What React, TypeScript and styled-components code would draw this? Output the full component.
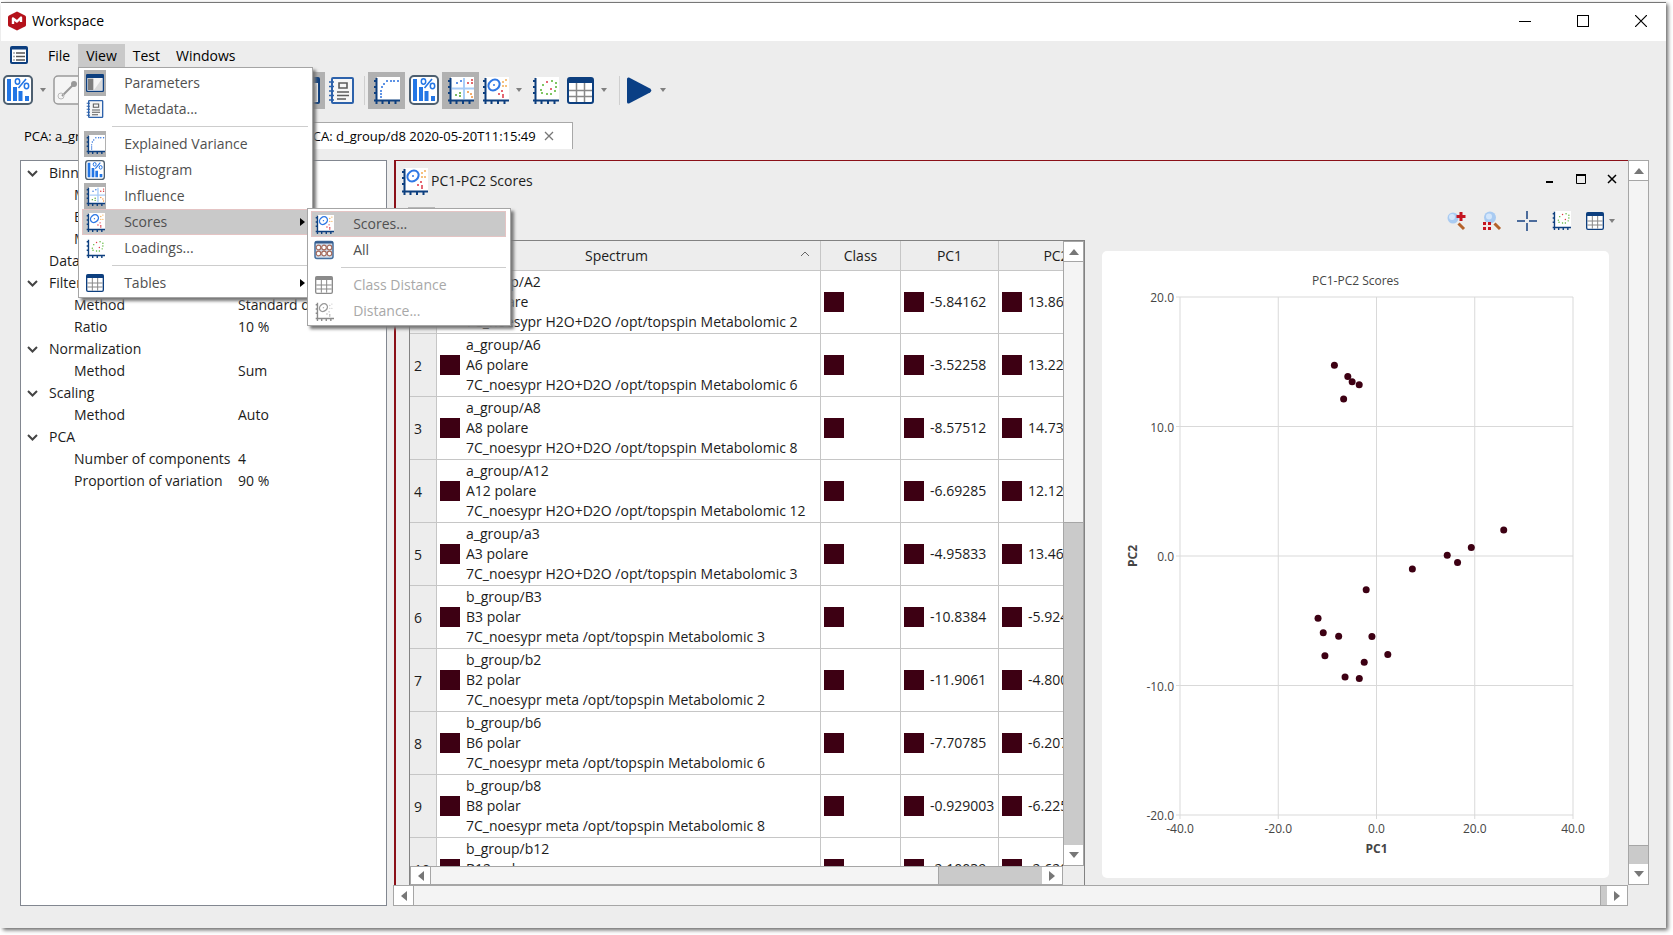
import React from "react";
import styled, { createGlobalStyle, css } from "styled-components";

const NAVY = "#0d3f7f";
const LINE = "#a6a6a6";
const WINE = "#3d0013";

const GlobalStyle = createGlobalStyle`
  * { box-sizing: border-box; }
  body {
    margin: 0;
    background: #fff;
    color: #1c1c1c;
    font-family: "Open Sans", "Noto Sans", sans-serif;
    font-size: 14px;
    line-height: 20px;
  }
  button {
    font: inherit;
    color: inherit;
    background: none;
    border: 0;
    padding: 0;
    display: flex;
    align-items: center;
    text-align: left;
  }
  svg { display: block; flex: none; }
`;

/* ---------- icons ---------- */

type IconProps = { size?: number; muted?: boolean };

const Dots = ({ points, color, r = 1 }: { points: number[][]; color: string; r?: number }) => (
  <>
    {points.map(([x, y], i) => (
      <circle key={i} cx={x} cy={y} r={r} fill={color} />
    ))}
  </>
);

const Axes = ({ size = 27, muted, children }: IconProps & { children?: React.ReactNode }) => (
  <svg width={size} height={size} viewBox="0 0 27 27">
    <rect x="4" y="0" width="23" height="23" fill="#fff" />
    <path
      d="M3.5 1V26M1 23.5H27M1 4h3M1 10h3M1 16h3M9.500 23v4M16 23v4M22.500 23v4M3.500 23v4"
      stroke={muted ? "#8b8b8b" : NAVY}
      strokeWidth="2"
      fill="none"
    />
    {children}
  </svg>
);

const VarianceIcon = (p: IconProps) => (
  <Axes {...p}>
    <Dots
      color="#2a6fdc"
      points={[[8, 20], [8, 17], [8, 14], [9, 10], [11, 7], [14, 4], [18, 4], [21, 4], [25, 4]]}
    />
  </Axes>
);

const InfluenceIcon = (p: IconProps) => (
  <Axes {...p}>
    <path d="M17 1V22M5 11.500H27" stroke="#a9cdf7" strokeWidth="2" />
    <Dots color="#2a6fdc" points={[[10, 6], [14, 4]]} />
    <Dots color="#d8343a" points={[[21, 6], [25, 3], [25, 6]]} />
    <Dots color="#4da52e" points={[[9, 18], [13, 16], [13, 19]]} />
    <Dots color="#f0913a" points={[[21, 15], [24, 17], [25, 20]]} />
  </Axes>
);

const ScoresIcon = (p: IconProps) => (
  <Axes {...p}>
    <ellipse
      cx="12"
      cy="8"
      rx="6"
      ry="5"
      transform="rotate(-40 12 8)"
      fill="none"
      stroke={p.muted ? "#9a9a9a" : "#2f78e4"}
      strokeWidth="2"
    />
    <Dots color={p.muted ? "#aaa" : "#2f78e4"} points={[[12, 8]]} />
    <Dots color={p.muted ? "#ccc" : "#f3ad55"} points={[[21, 5], [24, 3], [24, 9], [21, 9]]} />
    <Dots color={p.muted ? "#aaa" : "#dc3545"} points={[[17, 17], [20, 14], [21, 18], [21, 20]]} />
  </Axes>
);

const LoadingsIcon = (p: IconProps) => (
  <Axes {...p}>
    <Dots color="#55b32f" points={[[9, 13], [20, 4], [24, 6], [24, 10], [23, 14], [19, 17], [15, 17], [10, 16], [11, 8]]} />
    <Dots color="#dc3545" points={[[15, 5], [19, 12]]} />
  </Axes>
);

const TableIcon = ({ size = 27, muted }: IconProps) => (
  <svg width={size} height={size} viewBox="0 0 27 27">
    <rect x="1" y="1" width="25" height="25" rx="2" fill="#fff" stroke={muted ? "#8b8b8b" : NAVY} strokeWidth="2" />
    <rect x="1" y="1" width="25" height="5" fill={muted ? "#8b8b8b" : NAVY} />
    <path d="M9.500 6V25M17.500 6V25M2 13.500H25M2 19.500H25" stroke="#888" strokeWidth="1.500" />
  </svg>
);

const HistogramIcon = ({ size = 30 }: IconProps) => (
  <svg width={size} height={size} viewBox="0 0 30 30">
    <rect x="1" y="1" width="28" height="28" rx="4" fill="#fff" stroke="#4d5f70" strokeWidth="2" />
    <path d="M4 4h4v22H4zM10 12h4v14h-4zM15.500 16h4v10h-4zM22 21h4v5h-4z" fill="#2376e5" />
    <path d="M15.500 13L23 4" stroke="#2376e5" strokeWidth="1.600" />
    <ellipse cx="14.500" cy="6.500" rx="2.200" ry="2.700" fill="none" stroke="#2376e5" strokeWidth="1.500" />
    <ellipse cx="23.500" cy="11" rx="2.200" ry="2.700" fill="none" stroke="#2376e5" strokeWidth="1.500" />
  </svg>
);

const NotebookIcon = ({ size = 27 }: IconProps) => (
  <svg width={size} height={size} viewBox="0 0 27 27">
    <rect x="4" y="1" width="21" height="25" rx="1" fill="#f6f6f6" stroke="#2d62ab" strokeWidth="2" />
    <path d="M1 5h5M1 9.500h5M1 14h5M1 18.500h5M1 23h5" stroke="#2d62ab" strokeWidth="1.600" />
    <path d="M11 6h8v5h-8zM9 15h12M9 18.500h12M9 22h9" stroke="#5c5c5c" strokeWidth="1.600" fill="none" />
  </svg>
);

const ParametersIcon = ({ size = 27 }: IconProps) => (
  <svg width={size} height={size} viewBox="0 0 27 27">
    <rect x="1" y="1" width="25" height="25" rx="1" fill="#f4f4f4" stroke={NAVY} strokeWidth="2" />
    <rect x="1" y="1" width="25" height="5" fill={NAVY} />
    <rect x="3" y="7" width="8" height="17" fill="#7e7e7e" />
    <path d="M24 7v17H12z" fill="#d9d9d9" />
  </svg>
);

const ListIcon = () => (
  <svg width="18" height="18" viewBox="0 0 18 18">
    <rect x="1" y="1" width="16" height="16" rx="1" fill="#fff" stroke={NAVY} strokeWidth="2" />
    <path d="M1 2.500h16" stroke={NAVY} strokeWidth="2" />
    <path d="M6 7h9M6 10.500h9M6 14h9" stroke="#555" strokeWidth="1.300" />
    <path d="M3.500 7h1M3.500 10.500h1M3.500 14h1" stroke="#555" strokeWidth="1.300" />
  </svg>
);

const AllIcon = ({ size = 19 }: IconProps) => (
  <svg width={size} height={size} viewBox="0 0 20 19">
    <rect x="1" y="1" width="18" height="17" rx="2" fill="#cfdcea" stroke="#456f9f" strokeWidth="1.500" />
    <path d="M1 2h18" stroke="#345b8c" strokeWidth="2" />
    {[4.5, 10, 15.5].map((x) => (
      <g key={x} fill="#fff" stroke="#a46a5c" strokeWidth="1.200">
        <circle cx={x} cy="7" r="2.300" />
        <circle cx={x} cy="13" r="2.300" />
      </g>
    ))}
  </svg>
);

const LinkIcon = () => (
  <svg width="30" height="30" viewBox="0 0 30 30">
    <rect x="1" y="1" width="28" height="28" rx="4" fill="#f5f5f5" stroke="#9a9a9a" strokeWidth="1.500" />
    <path d="M9 21L21 9" stroke="#999" strokeWidth="2" />
    <circle cx="8" cy="21" r="3" fill="none" stroke="#bbb" />
    <circle cx="21" cy="9" r="3" fill="#999" />
  </svg>
);

const PlayIcon = () => (
  <svg width="26" height="27" viewBox="0 0 26 27">
    <path d="M1 2Q1 0 3 .500L24 11.500Q26.500 13.500 24 15.500L3 26.500Q1 27 1 25z" fill="#0a3f85" />
  </svg>
);

const Logo = () => (
  <svg width="18" height="20" viewBox="0 0 18 20">
    <path d="M9 0.500L17 4.500Q18 5 18 6V14Q18 15 17 15.500L9 19.500L1 15.500Q0 15 0 14V6Q0 5 1 4.500Z" fill="#b5121b" />
    <path d="M5 13V7.500L9 10.500L13 6.500V11" stroke="#fff" strokeWidth="2.400" fill="none" strokeLinejoin="round" />
  </svg>
);

const ZoomPlusIcon = () => (
  <svg width="20" height="20" viewBox="0 0 20 20">
    <circle cx="6" cy="7" r="5.500" fill="#a9cbf2" />
    <circle cx="5" cy="6" r="3" fill="#d3e6fb" />
    <path d="M11.500 12.500L17 18" stroke="#b4622a" strokeWidth="3" />
    <path d="M14 1v9M9.500 5.500h9" stroke="#c41420" strokeWidth="3" />
  </svg>
);

const ZoomFitIcon = () => (
  <svg width="20" height="20" viewBox="0 0 20 20">
    <circle cx="8" cy="6.500" r="6" fill="#a9cbf2" />
    <circle cx="7" cy="5.500" r="3" fill="#d3e6fb" />
    <path d="M12.500 12.500L18 18" stroke="#b4622a" strokeWidth="3" />
    <path d="M1 11h8v8h-8z" fill="#f3e4e4" />
    <path d="M1 11h3v3h-3zM6 11h3v3h-3zM1 16h3v3h-3zM6 16h3v3h-3z" fill="#c41420" />
  </svg>
);

const CrossIcon = () => (
  <svg width="20" height="20" viewBox="0 0 20 20">
    <path d="M0 10h8M12 10h8M10 0v8M10 12v8" stroke="#4c6c9c" strokeWidth="2" />
  </svg>
);

const Chevron = () => (
  <svg width="11" height="7" viewBox="0 0 11 7">
    <path d="M1 1L5.500 5.500L10 1" stroke="#444" strokeWidth="2" fill="none" />
  </svg>
);

const SubmenuArrow = () => (
  <svg width="5" height="8" viewBox="0 0 5 8">
    <path d="M0 0L5 4L0 8z" fill="#000" />
  </svg>
);

const turns = { up: 0, right: 90, down: 180, left: 270 };
const ScrollArrow = ({ to }: { to: keyof typeof turns }) => (
  <svg width="12" height="12" viewBox="0 0 12 12">
    <path d="M1 9L6 3L11 9z" fill="#777" transform={`rotate(${turns[to]} 6 6)`} />
  </svg>
);

/* ---------- window shell ---------- */

const Screen = styled.div`
  height: 100vh;
  min-height: 600px;
  padding: 2px 7px 7px 1px;
  display: flex;
  overflow: hidden;
`;

const Window = styled.div`
  flex: 1;
  min-width: 0;
  display: flex;
  flex-direction: column;
  background: #ededed;
  border-top: 1px solid #777;
  box-shadow: 2px 2px 4px 0 #666;
`;

const TitleBar = styled.header`
  height: 38px;
  flex: none;
  padding: 0 2px 2px 7px;
  display: flex;
  align-items: center;
  background: #fff;
  color: #000;
`;

const WindowTitle = styled.h1`
  margin: 0 0 0 6px;
  flex: 1;
  font-size: 14px;
  font-weight: 400;
`;

const WindowButton = styled.button`
  width: 46px;
  height: 30px;
  justify-content: center;
  & + & { margin-left: 12px; }
`;

const MenuBar = styled.nav`
  height: 29px;
  flex: none;
  display: flex;
  align-items: center;
  padding: 0 9px;
  color: #000;
`;

const MenuBarIcon = styled.span`
  padding: 0 12px 2px 0;
`;

const MenuAnchor = styled.div`
  position: relative;
`;

const MenuTitle = styled.button<{ $open?: boolean }>`
  height: 23px;
  padding: 0 8px;
  background: ${(p) => (p.$open ? "#c9c9c9" : "none")};
`;

const ToolBar = styled.div`
  height: 40px;
  flex: none;
  padding-left: 2px;
  display: flex;
  align-items: center;
`;

const HiddenTools = styled.div`
  width: 285px;
  display: flex;
  align-items: center;
  gap: 2px;
`;

const Tool = styled.button<{ $checked?: boolean; $slim?: boolean }>`
  width: ${(p) => (p.$slim ? 32 : 37)}px;
  height: 37px;
  justify-content: center;
  background: ${(p) => (p.$checked ? "#b1b1b1" : "none")};
`;

const DropArrow = styled.button`
  width: 16px;
  height: 37px;
  justify-content: center;
  &::after {
    content: "";
    border: 3px solid transparent;
    border-top: 4px solid #808080;
    border-bottom: 0;
  }
`;

const ToolDivider = styled.span`
  width: 1px;
  height: 29px;
  margin: 0 3px 0 7px;
  background: #cfcfcf;
`;

/* ---------- menus ---------- */

const MenuPanel = styled.div<{ $sub?: boolean }>`
  position: absolute;
  z-index: ${(p) => (p.$sub ? 3 : 2)};
  top: ${(p) => (p.$sub ? 140 : 23)}px;
  left: ${(p) => (p.$sub ? 228 : 0)}px;
  width: ${(p) => (p.$sub ? 204 : 235)}px;
  padding: 2px 4px 1px 3px;
  background: #fff;
  border: 1px solid #a5a5a5;
  box-shadow: 3px 3px 3px #777;
  color: #505050;
`;

const MenuItem = styled.button<{ $active?: boolean }>`
  width: 100%;
  height: 26px;
  border: 1px solid transparent;
  ${(p) =>
    p.$active &&
    css`
      background: #c9c9c9;
      border-color: #e4c4c4;
    `}
  &:disabled { color: #a8a8a8; }
`;

const MenuIcon = styled.span<{ $checked?: boolean }>`
  width: 22px;
  height: 26px;
  margin: 0 18px 0 1px;
  display: flex;
  flex: none;
  align-items: center;
  justify-content: center;
  background: ${(p) => (p.$checked ? "#b1b1b1" : "none")};
`;

const MenuLabel = styled.span`
  flex: 1;
`;

const MenuArrow = styled.span`
  padding-right: 2px;
`;

const MenuDivider = styled.hr`
  height: 1px;
  margin: 4px 0 4px 30px;
  border: 0;
  background: #cdcdcd;
`;

/* ---------- document tabs ---------- */

const TabBar = styled.div`
  height: 39px;
  flex: none;
  padding: 12px 0 0 7px;
  display: flex;
  font-size: 13px;
  color: #000;
`;

const Tab = styled.div<{ $active?: boolean }>`
  width: ${(p) => (p.$active ? 284 : 281)}px;
  height: 27px;
  padding-left: 16px;
  display: flex;
  align-items: center;
  gap: 8px;
  white-space: nowrap;
  ${(p) =>
    p.$active &&
    css`
      background: #fff;
      border: solid #a8a8a8;
      border-width: 1px 1px 0 0;
    `}
`;

const Workspace = styled.main`
  flex: 1;
  min-height: 0;
  margin: 11px 17px 22px 19px;
  display: flex;
  gap: 6px;
`;

/* ---------- parameter tree ---------- */

const TreePanel = styled.aside`
  width: 367px;
  flex: none;
  padding: 1px 6px;
  background: #fff;
  border: 1px solid #828790;
  overflow: hidden;
`;

const TreeRow = styled.div<{ $group?: boolean }>`
  height: 22px;
  display: grid;
  grid-template-columns: ${(p) => (p.$group ? "22px 1fr" : "164px 1fr")};
  padding-left: ${(p) => (p.$group ? 0 : 47)}px;
  align-items: center;
  white-space: nowrap;
`;

/* ---------- inner window ---------- */

const Mdi = styled.section`
  flex: 1;
  min-width: 0;
  display: grid;
  grid-template: minmax(0, 1fr) 21px / minmax(0, 1fr) 21px;
`;

const SubWindow = styled.div`
  margin-left: 1px;
  min-height: 0;
  display: flex;
  flex-direction: column;
  border: solid #8b1018;
  border-width: 1px 0 0 2px;
`;

const SubTitle = styled.div`
  height: 40px;
  flex: none;
  padding: 0 1px 0 5px;
  display: flex;
  align-items: center;
`;

const SubHeading = styled.h2`
  margin: 0 0 0 3px;
  flex: 1;
  font-size: 14px;
  font-weight: 400;
`;

const SubButton = styled.button`
  width: 31px;
  height: 20px;
  margin-bottom: 4px;
  justify-content: center;
`;

const SubTools = styled.div`
  height: 39px;
  flex: none;
  padding-right: 8px;
  display: flex;
  align-items: center;
  justify-content: flex-end;
  gap: 15px;
`;

const SavedTool = styled.button`
  width: 27px;
  height: 27px;
  margin: 0 auto 0 12px;
  background: #b9b9b9;
`;

const TableTool = styled.div`
  display: flex;
  align-items: center;
`;

const SubBody = styled.div`
  flex: 1;
  min-height: 0;
  padding: 0 19px 0 13px;
  display: flex;
  gap: 17px;
`;

const TableFrame = styled.div`
  width: 676px;
  flex: none;
  display: grid;
  grid-template: minmax(0, 1fr) 19px / minmax(0, 1fr) 21px;
  border: 1px solid #828282;
  border-bottom: 0;
`;

const TableView = styled.div`
  overflow: hidden;
  background: #fff;
`;

const ScoresTable = styled.table`
  width: 704px;
  table-layout: fixed;
  border-collapse: separate;
  border-spacing: 0;
  th, td {
    padding: 0;
    font-weight: 400;
    border: solid #c6c6c6;
    border-width: 0 1px 1px 0;
  }
`;

const HeadCell = styled.th<{ $width: number; $sorted?: boolean }>`
  width: ${(p) => p.$width}px;
  height: 30px;
  background: #ededed;
  text-align: center;
  span { margin-right: ${(p) => (p.$sorted ? 24 : 0)}px; }
  svg { float: right; margin: 5px 10px 0 -20px; }
`;

const RowHead = styled.th`
  background: #ededed;
  && { padding: 2px 0 0 4px; }
  text-align: left;
`;

const Cell = styled.td`
  height: 63px;
`;

const CellContent = styled.div`
  padding-left: 3px;
  height: 62px;
  display: flex;
  align-items: center;
  gap: 6px;
  white-space: pre;
`;

const Swatch = styled.span`
  width: 20px;
  height: 20px;
  flex: none;
  background: ${WINE};
`;

/* ---------- scroll bars ---------- */

const Bar = styled.div<{ $horizontal?: boolean }>`
  display: flex;
  flex-direction: ${(p) => (p.$horizontal ? "row" : "column")};
  background: #f4f4f4;
  border: 1px solid ${LINE};
`;

const ScrollButton = styled.button`
  flex: 0 0 20px;
  justify-content: center;
  background: #fff;
`;

const Track = styled.div<{ $grow: number }>`
  flex: ${(p) => p.$grow} 1 0;
  box-shadow: 0 0 0 1px ${LINE};
`;

const Thumb = styled.div<{ $grow?: number; $size?: number }>`
  flex: ${(p) => (p.$grow ? `${p.$grow} 1 0` : `0 0 ${p.$size}px`)};
  background: #cacaca;
  box-shadow: 0 0 0 1px ${LINE};
`;

/* ---------- chart ---------- */

const ChartCard = styled.figure`
  flex: 1;
  min-width: 0;
  margin: 11px 0 7px;
  padding: 20px 36px 63px 78px;
  display: flex;
  flex-direction: column;
  background: #fff;
  border-radius: 5px;
`;

const ChartTitle = styled.figcaption`
  height: 26px;
  margin: 0 -36px 0 -78px;
  text-align: center;
  font-size: 12px;
  color: #454545;
`;

const Plot = styled.svg`
  width: 100%;
  flex: 1 1 0;
  min-height: 0;
  overflow: visible;
  font-size: 12px;
  fill: #454545;
`;

const scorePoints = [
  [-8.57, 14.73], [-5.84, 13.86], [-4.96, 13.46], [-3.52, 13.22], [-6.69, 12.12],
  [25.9, 2.0], [19.3, 0.65], [14.4, 0.05], [16.5, -0.5], [7.3, -1.0], [-2.1, -2.6],
  [-11.9, -4.8], [-10.84, -5.92], [-7.7, -6.2], [-0.93, -6.22], [-10.5, -7.7],
  [2.3, -7.6], [-2.5, -8.2], [-6.4, -9.35], [-3.5, -9.45],
];

const xAt = (v: number) => `${((v + 40) / 80) * 100}%`;
const yAt = (v: number) => `${((20 - v) / 40) * 100}%`;

const ScatterPlot = () => (
  <Plot role="img" aria-label="PC1-PC2 Scores">
    {[20, 10, 0, -10, -20].map((v) => (
      <g key={v}>
        <line x1="-4" x2="100%" y1={yAt(v)} y2={yAt(v)} stroke="#d9d9d9" />
        <text x="-6" y={yAt(v)} dy="5" textAnchor="end">{v.toFixed(1)}</text>
      </g>
    ))}
    {[-40, -20, 0, 20, 40].map((v) => (
      <g key={v}>
        <line x1={xAt(v)} x2={xAt(v)} y1="0" y2="100%" stroke="#d9d9d9" />
        <svg x={xAt(v)} y="100%" overflow="visible">
          <line y2="4" stroke="#d9d9d9" />
          <text y="18" textAnchor="middle">{v.toFixed(1)}</text>
        </svg>
      </g>
    ))}
    {scorePoints.map(([x, y], i) => (
      <circle key={i} cx={xAt(x)} cy={yAt(y)} r="3.500" fill={WINE} />
    ))}
    <svg x="50%" y="100%" overflow="visible">
      <text y="38" textAnchor="middle" fontWeight="700">PC1</text>
    </svg>
    <svg y="50%" overflow="visible">
      <text transform="translate(-43 0) rotate(-90)" textAnchor="middle" fontWeight="700">PC2</text>
    </svg>
  </Plot>
);

/* ---------- data ---------- */

const tree: { group?: boolean; open?: boolean; name: string; value?: string }[] = [
  { group: true, open: true, name: "Binning" },
  { name: "Method" },
  { name: "Bin width" },
  { name: "Maximum" },
  { group: true, name: "Data" },
  { group: true, open: true, name: "Filter" },
  { name: "Method", value: "Standard deviation" },
  { name: "Ratio", value: "10 %" },
  { group: true, open: true, name: "Normalization" },
  { name: "Method", value: "Sum" },
  { group: true, open: true, name: "Scaling" },
  { name: "Method", value: "Auto" },
  { group: true, open: true, name: "PCA" },
  { name: "Number of components", value: "4" },
  { name: "Proportion of variation", value: "90 %" },
];

const spectra = [
  ["a_group/A2", "A2 polare", "H2O+D2O /opt/topspin Metabolomic 2", "-5.84162", "13.8625"],
  ["a_group/A6", "A6 polare", "H2O+D2O /opt/topspin Metabolomic 6", "-3.52258", "13.2241"],
  ["a_group/A8", "A8 polare", "H2O+D2O /opt/topspin Metabolomic 8", "-8.57512", "14.7318"],
  ["a_group/A12", "A12 polare", "H2O+D2O /opt/topspin Metabolomic 12", "-6.69285", "12.1207"],
  ["a_group/a3", "A3 polare", "H2O+D2O /opt/topspin Metabolomic 3", "-4.95833", "13.4622"],
  ["b_group/B3", "B3 polar", "meta /opt/topspin Metabolomic 3", "-10.8384", "-5.92431"],
  ["b_group/b2", "B2 polar", "meta /opt/topspin Metabolomic 2", "-11.9061", "-4.80012"],
  ["b_group/b6", "B6 polar", "meta /opt/topspin Metabolomic 6", "-7.70785", "-6.20714"],
  ["b_group/b8", "B8 polar", "meta /opt/topspin Metabolomic 8", "-0.929003", "-6.22518"],
  ["b_group/b12", "B12 polar", "meta /opt/topspin Metabolomic 12", "-2.10039", "-2.62047"],
];

type Entry = { label: string; icon: React.ReactNode; checked?: boolean; active?: boolean; disabled?: boolean; sub?: boolean } | null;

const viewMenu: Entry[] = [
  { label: "Parameters", icon: <ParametersIcon size={18} />, checked: true },
  { label: "Metadata...", icon: <NotebookIcon size={18} /> },
  null,
  { label: "Explained Variance", icon: <VarianceIcon size={19} />, checked: true },
  { label: "Histogram", icon: <HistogramIcon size={20} /> },
  { label: "Influence", icon: <InfluenceIcon size={19} />, checked: true },
  { label: "Scores", icon: <ScoresIcon size={19} />, active: true, sub: true },
  { label: "Loadings...", icon: <LoadingsIcon size={19} /> },
  null,
  { label: "Tables", icon: <TableIcon size={18} />, sub: true },
];

const scoresMenu: Entry[] = [
  { label: "Scores...", icon: <ScoresIcon size={19} />, active: true },
  { label: "All", icon: <AllIcon size={20} /> },
  null,
  { label: "Class Distance", icon: <TableIcon size={18} muted />, disabled: true },
  { label: "Distance...", icon: <ScoresIcon size={19} muted />, disabled: true },
];

const MenuEntries = ({ entries }: { entries: Entry[] }) => (
  <>
    {entries.map((e, i) =>
      e ? (
        <MenuItem key={i} role="menuitem" $active={e.active} disabled={e.disabled}>
          <MenuIcon $checked={e.checked}>{e.icon}</MenuIcon>
          <MenuLabel>{e.label}</MenuLabel>
          {e.sub && <MenuArrow><SubmenuArrow /></MenuArrow>}
        </MenuItem>
      ) : (
        <MenuDivider key={i} />
      )
    )}
  </>
);

export default function App() {
  return (
    <Screen>
      <GlobalStyle />
      <Window>
        <TitleBar>
          <Logo />
          <WindowTitle>Workspace</WindowTitle>
          <WindowButton aria-label="Minimize">
            <svg width="12" height="12"><path d="M0 6.500h12" stroke="#000" /></svg>
          </WindowButton>
          <WindowButton aria-label="Maximize">
            <svg width="12" height="12"><rect x=".5" y=".5" width="11" height="11" fill="none" stroke="#000" /></svg>
          </WindowButton>
          <WindowButton aria-label="Close">
            <svg width="12" height="12"><path d="M0 0L12 12M12 0L0 12" stroke="#000" strokeWidth="1.200" /></svg>
          </WindowButton>
        </TitleBar>

        <MenuBar>
          <MenuBarIcon><ListIcon /></MenuBarIcon>
          <MenuTitle>File</MenuTitle>
          <MenuAnchor>
            <MenuTitle $open aria-haspopup="menu">View</MenuTitle>
            <MenuPanel role="menu">
              <MenuEntries entries={viewMenu} />
              <MenuPanel role="menu" $sub>
                <MenuEntries entries={scoresMenu} />
              </MenuPanel>
            </MenuPanel>
          </MenuAnchor>
          <MenuTitle>Test</MenuTitle>
          <MenuTitle>Windows</MenuTitle>
        </MenuBar>

        <ToolBar>
          <HiddenTools>
            <button aria-label="Histogram"><HistogramIcon /></button>
            <DropArrow aria-label="Histogram options" />
            <button aria-label="Link"><LinkIcon /></button>
          </HiddenTools>
          <Tool $checked aria-label="Parameters"><ParametersIcon /></Tool>
          <Tool $slim aria-label="Metadata"><NotebookIcon /></Tool>
          <ToolDivider />
          <Tool $checked aria-label="Explained Variance"><VarianceIcon /></Tool>
          <Tool aria-label="Histogram"><HistogramIcon /></Tool>
          <Tool $checked aria-label="Influence"><InfluenceIcon /></Tool>
          <Tool $slim aria-label="Scores"><ScoresIcon /></Tool>
          <DropArrow aria-label="Scores options" />
          <Tool aria-label="Loadings"><LoadingsIcon /></Tool>
          <Tool $slim aria-label="Tables"><TableIcon /></Tool>
          <DropArrow aria-label="Tables options" />
          <ToolDivider />
          <Tool $slim aria-label="Run"><PlayIcon /></Tool>
          <DropArrow aria-label="Run options" />
        </ToolBar>

        <TabBar role="tablist">
          <Tab role="tab">PCA: a_group/A2 2020-05-20T11:02:31</Tab>
          <Tab role="tab" $active>
            PCA: d_group/d8 2020-05-20T11:15:49
            <button aria-label="Close tab">
              <svg width="10" height="10"><path d="M1 1L9 9M9 1L1 9" stroke="#777" strokeWidth="1.300" /></svg>
            </button>
          </Tab>
        </TabBar>

        <Workspace>
          <TreePanel>
            {tree.map((row, i) =>
              row.group ? (
                <TreeRow key={i} $group>
                  <span>{row.open && <Chevron />}</span>
                  <span>{row.name}</span>
                </TreeRow>
              ) : (
                <TreeRow key={i}>
                  <span>{row.name}</span>
                  <span>{row.value}</span>
                </TreeRow>
              )
            )}
          </TreePanel>

          <Mdi>
            <SubWindow>
              <SubTitle>
                <ScoresIcon />
                <SubHeading>PC1-PC2 Scores</SubHeading>
                <SubButton aria-label="Minimize">
                  <svg width="10" height="10"><path d="M1 8h7" stroke="#000" strokeWidth="2" /></svg>
                </SubButton>
                <SubButton aria-label="Maximize">
                  <svg width="10" height="10"><path d="M.5 1v8.500h9V1z" stroke="#000" fill="none" /><path d="M0 1h10" stroke="#000" strokeWidth="2" /></svg>
                </SubButton>
                <SubButton aria-label="Close">
                  <svg width="10" height="10"><path d="M1 1L9 9M9 1L1 9" stroke="#000" strokeWidth="1.500" /></svg>
                </SubButton>
              </SubTitle>
              <SubTools>
                <SavedTool aria-label="Save" />
                <button aria-label="Zoom in"><ZoomPlusIcon /></button>
                <button aria-label="Zoom to fit"><ZoomFitIcon /></button>
                <button aria-label="Crosshair"><CrossIcon /></button>
                <button aria-label="Loadings"><LoadingsIcon size={19} /></button>
                <TableTool>
                  <button aria-label="Table"><TableIcon size={18} /></button>
                  <DropArrow aria-label="Table options" />
                </TableTool>
              </SubTools>
              <SubBody>
                <TableFrame>
                  <TableView>
                    <ScoresTable>
                      <thead>
                        <tr>
                          <HeadCell $width={27} aria-label="Row" />
                          <HeadCell $width={384} $sorted>
                            <span>Spectrum</span>
                            <svg width="10" height="6"><path d="M1 5L5 1L9 5" stroke="#666" fill="none" /></svg>
                          </HeadCell>
                          <HeadCell $width={80}>Class</HeadCell>
                          <HeadCell $width={98}>PC1</HeadCell>
                          <HeadCell $width={115}>PC2</HeadCell>
                        </tr>
                      </thead>
                      <tbody>
                        {spectra.map(([group, name, detail, pc1, pc2], i) => (
                          <tr key={group}>
                            <RowHead scope="row">{i + 1}</RowHead>
                            <Cell>
                              <CellContent><Swatch />{`${group}\n${name}\n7C_noesypr ${detail}`}</CellContent>
                            </Cell>
                            <Cell><CellContent><Swatch /></CellContent></Cell>
                            <Cell><CellContent><Swatch />{pc1}</CellContent></Cell>
                            <Cell><CellContent><Swatch />{pc2}</CellContent></Cell>
                          </tr>
                        ))}
                      </tbody>
                    </ScoresTable>
                  </TableView>
                  <Bar>
                    <ScrollButton aria-label="Scroll up"><ScrollArrow to="up" /></ScrollButton>
                    <Track $grow={261} />
                    <Thumb $grow={323} />
                    <ScrollButton aria-label="Scroll down"><ScrollArrow to="down" /></ScrollButton>
                  </Bar>
                  <Bar $horizontal>
                    <ScrollButton aria-label="Scroll left"><ScrollArrow to="left" /></ScrollButton>
                    <Track $grow={508} />
                    <Thumb $grow={103} />
                    <ScrollButton aria-label="Scroll right"><ScrollArrow to="right" /></ScrollButton>
                  </Bar>
                </TableFrame>
                <ChartCard>
                  <ChartTitle>PC1-PC2 Scores</ChartTitle>
                  <ScatterPlot />
                </ChartCard>
              </SubBody>
            </SubWindow>
            <Bar>
              <ScrollButton aria-label="Scroll up"><ScrollArrow to="up" /></ScrollButton>
              <Track $grow={1} />
              <Thumb $size={18} />
              <ScrollButton aria-label="Scroll down"><ScrollArrow to="down" /></ScrollButton>
            </Bar>
            <Bar $horizontal>
              <ScrollButton aria-label="Scroll left"><ScrollArrow to="left" /></ScrollButton>
              <Track $grow={1} />
              <Thumb $size={6} />
              <ScrollButton aria-label="Scroll right"><ScrollArrow to="right" /></ScrollButton>
            </Bar>
          </Mdi>
        </Workspace>
      </Window>
    </Screen>
  );
}
